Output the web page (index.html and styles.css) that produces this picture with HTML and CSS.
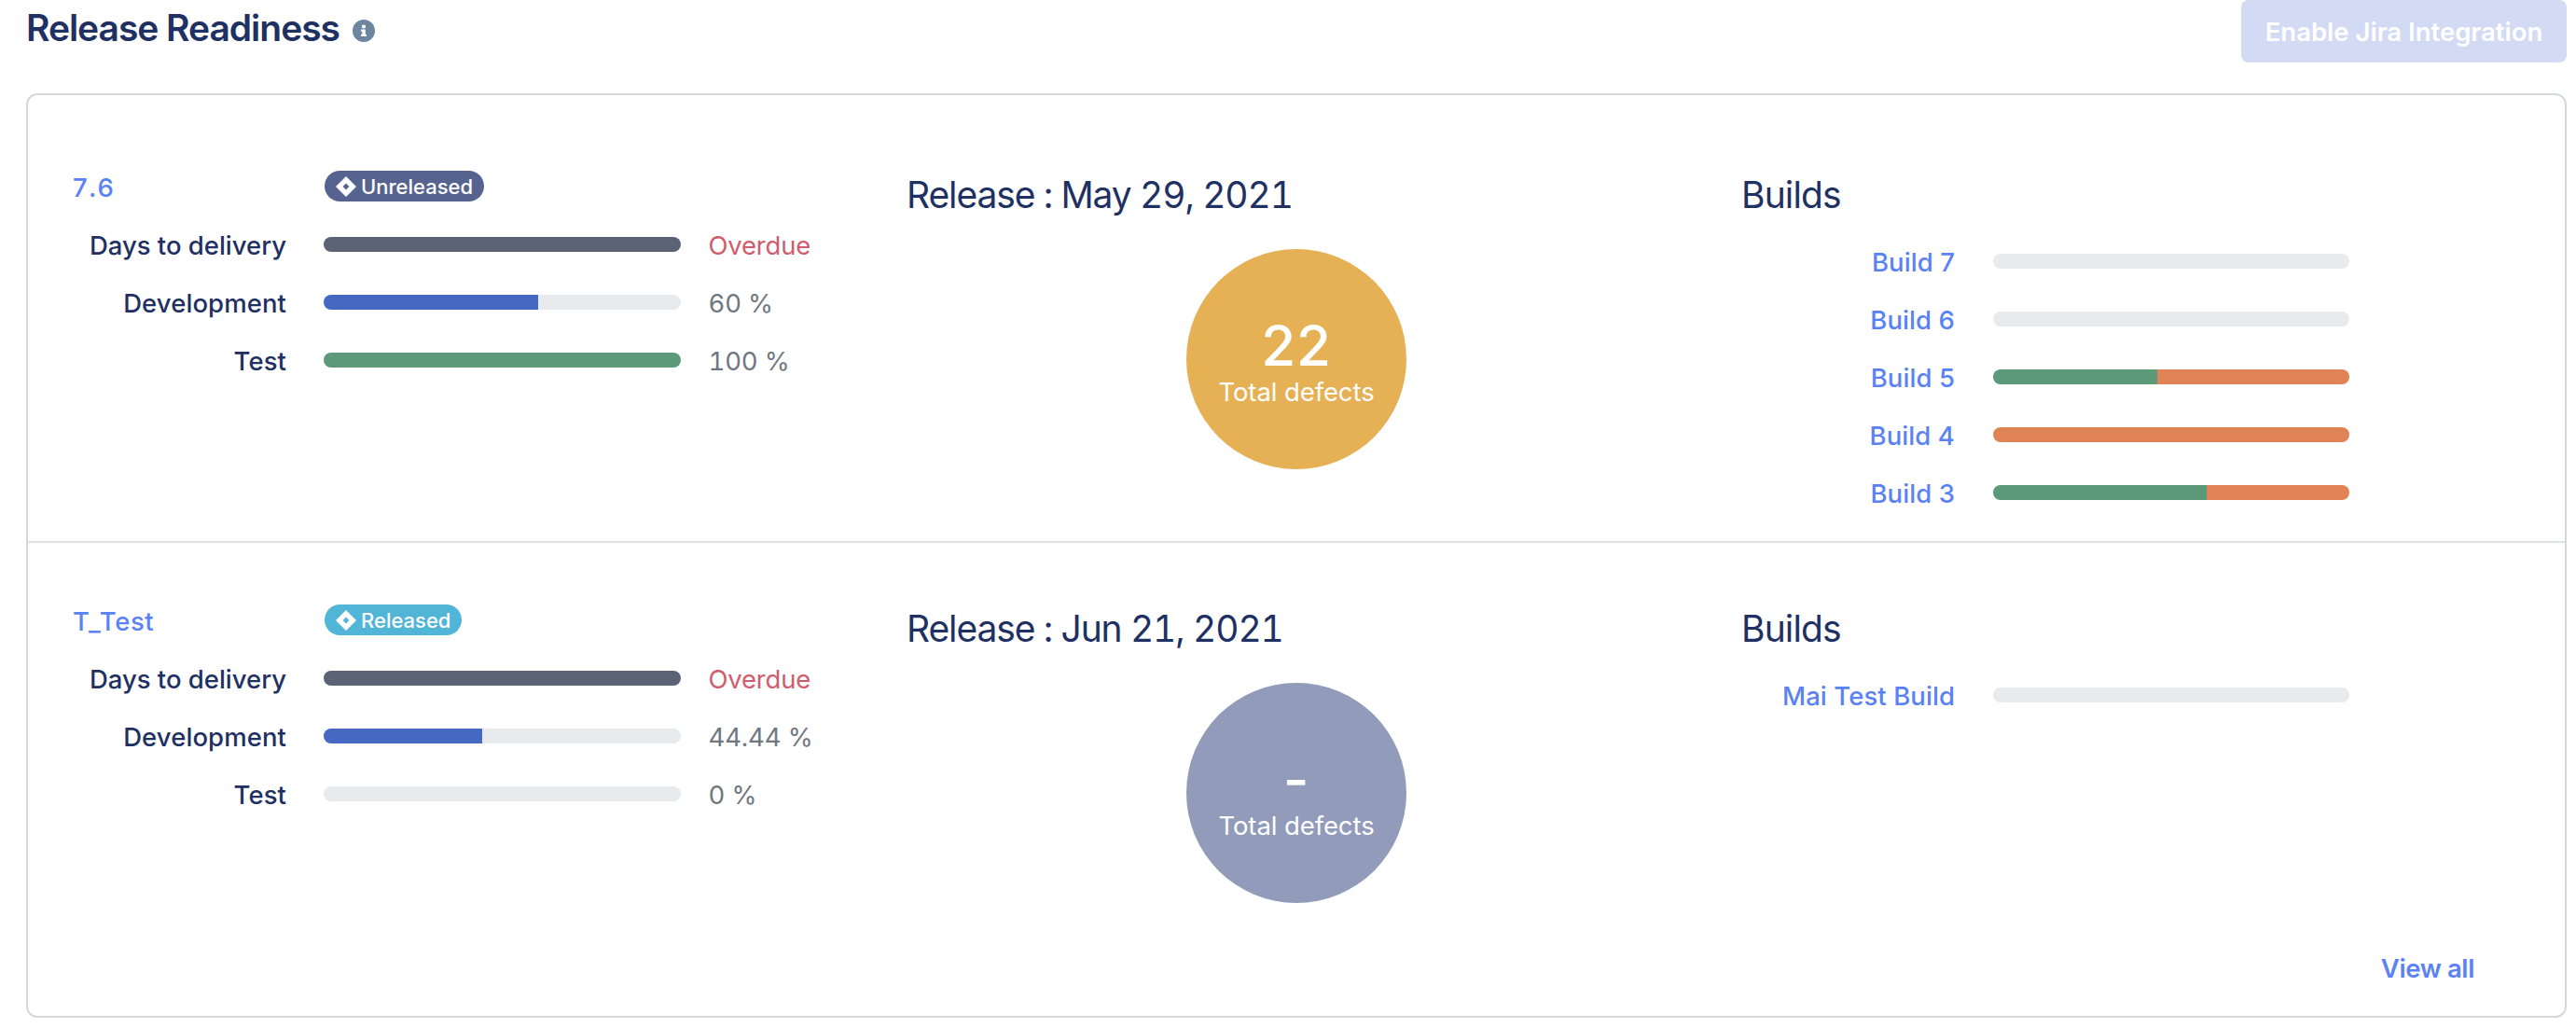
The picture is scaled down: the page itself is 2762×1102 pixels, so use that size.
FILE: index.html
```html
<!DOCTYPE html>
<html lang="en">
<head>
<meta charset="utf-8">
<title>Release Readiness</title>
<link rel="stylesheet" href="styles.css">
</head>
<body>
<header class="header">
  <h1 class="title">Release Readiness</h1>
  <svg class="info" viewBox="0 0 24 24" aria-label="Info"><circle cx="12" cy="12" r="12" fill="#6b869e"/><circle cx="12" cy="7.5" r="2.1" fill="#fff"/><path d="M9.1 10.6h4.7v5.1h1.1v2.2H9.1v-2.2h1.2v-2.9H9.1z" fill="#fff"/></svg>
  <button class="jira-button" disabled>Enable Jira Integration</button>
</header>
<main class="card">
  <section class="release release-first">
    <div class="columns">
      <div class="progress-column">
        <div class="name-row">
          <a class="version digits">7.6</a>
          <span class="badge badge-unreleased"><svg class="badge-icon" viewBox="0 0 22 22"><path fill="#fff" fill-rule="evenodd" d="M11 0 22 11 11 22 0 11zM11 7.6 7.6 11l3.4 3.4 3.4-3.4z"/></svg>Unreleased</span>
        </div>
        <div class="metric"><span class="label days">Days to delivery</span><div class="bar"><div class="fill slate" style="width:100%"></div></div><span class="value overdue">Overdue</span></div>
        <div class="metric"><span class="label">Development</span><div class="bar"><div class="fill blue" style="width:60%"></div></div><span class="value">60 %</span></div>
        <div class="metric"><span class="label">Test</span><div class="bar"><div class="fill green" style="width:100%"></div></div><span class="value">100 %</span></div>
      </div>
      <div class="defects-column">
        <h2 class="heading date">Release : May 29, 2021</h2>
        <div class="circle circle-amber"><strong class="count">22</strong><span class="caption">Total defects</span></div>
      </div>
      <div class="builds-column">
        <h2 class="heading builds-heading">Builds</h2>
        <div class="builds">
          <div class="metric"><a class="label build">Build 7</a><div class="bar"></div></div>
          <div class="metric"><a class="label build">Build 6</a><div class="bar"></div></div>
          <div class="metric"><a class="label build">Build 5</a><div class="bar"><div class="fill green" style="width:46.15%"></div><div class="fill orange" style="width:53.85%"></div></div></div>
          <div class="metric"><a class="label build">Build 4</a><div class="bar"><div class="fill orange" style="width:100%"></div></div></div>
          <div class="metric"><a class="label build">Build 3</a><div class="bar"><div class="fill green" style="width:60%"></div><div class="fill orange" style="width:40%"></div></div></div>
        </div>
      </div>
    </div>
  </section>
  <section class="release release-last">
    <div class="columns">
      <div class="progress-column">
        <div class="name-row">
          <a class="version">T_Test</a>
          <span class="badge badge-released"><svg class="badge-icon" viewBox="0 0 22 22"><path fill="#fff" fill-rule="evenodd" d="M11 0 22 11 11 22 0 11zM11 7.6 7.6 11l3.4 3.4 3.4-3.4z"/></svg>Released</span>
        </div>
        <div class="metric"><span class="label days">Days to delivery</span><div class="bar"><div class="fill slate" style="width:100%"></div></div><span class="value overdue">Overdue</span></div>
        <div class="metric"><span class="label">Development</span><div class="bar"><div class="fill blue" style="width:44.44%"></div></div><span class="value">44.44 %</span></div>
        <div class="metric"><span class="label">Test</span><div class="bar"></div><span class="value">0 %</span></div>
      </div>
      <div class="defects-column">
        <h2 class="heading date">Release : Jun 21, 2021</h2>
        <div class="circle circle-muted"><strong class="count">-</strong><span class="caption">Total defects</span></div>
      </div>
      <div class="builds-column">
        <h2 class="heading builds-heading">Builds</h2>
        <div class="builds">
          <div class="metric"><a class="label build">Mai Test Build</a><div class="bar"></div></div>
        </div>
      </div>
    </div>
    <div class="footer"><a class="view-all">View all</a></div>
  </section>
</main>
</body>
</html>
```
FILE: styles.css
```css
* { box-sizing: border-box; }

body {
  margin: 0;
  background: #fff;
  color: #1f3063;
  font-family: Inter, "Liberation Sans", sans-serif;
  font-size: 27.5px;
}

/* Page header */
.header {
  display: flex;
  align-items: flex-start;
  height: 100px;
  padding: 0 10px 0 28px;
}
.title {
  margin: 0;
  width: 350px;
  font-size: 39px;
  font-weight: 600;
  line-height: 59px;
  letter-spacing: -1.03px;
  white-space: nowrap;
}
.info { width: 24px; height: 24px; margin-top: 21px; }
.jira-button {
  width: 349px;
  height: 67px;
  margin-left: auto;
  padding: 1px 0 0;
  border: 0;
  border-radius: 8px;
  background: #d3daf3;
  color: #fff;
  font: 600 27.5px Inter, "Liberation Sans", sans-serif;
}

/* Releases card */
.card {
  margin: 0 10px 0 28px;
  border: 2px solid #d4d8dd;
  border-radius: 12px;
}
.release-first { height: 480px; padding-top: 68px; border-bottom: 2px solid #dfe1e5; }
.release-last {
  display: flex;
  flex-direction: column;
  height: 507px;
  padding: 53px 0 31px;
}
.columns {
  display: grid;
  grid-template-columns: 895px 895px 836px;
  padding-left: 47px;
}
.defects-column, .builds-column { width: 836px; }

.name-row { display: flex; align-items: center; height: 62px; }
.version {
  width: 271px;
  padding-left: 1px;
  color: #5a82f5;
  font-weight: 500;
  letter-spacing: .6px;
}
.digits { font-kerning: none; letter-spacing: 1.2px; }
.badge {
  display: flex;
  align-items: center;
  height: 33px;
  margin-bottom: 3px;
  padding: 0 12px;
  border-radius: 17px;
  color: #fff;
  font-size: 22px;
  font-weight: 500;
}
.badge-icon { width: 22px; height: 22px; margin-right: 5px; }
.badge-unreleased { background: #56638f; }
.badge-released { background: #50b5d6; }

/* Label, progress bar and value */
.metric {
  display: grid;
  grid-template-columns: 229px 382px;
  column-gap: 41px;
  align-items: center;
  height: 62px;
}
.progress-column .metric { grid-template-columns: 230px 383px auto; column-gap: 40px; }
.label { font-weight: 500; text-align: right; letter-spacing: .08px; white-space: nowrap; }
.days { letter-spacing: -.02px; }
.build { color: #5a82f5; letter-spacing: .08px; }
.bar {
  display: flex;
  height: 16px;
  margin-bottom: 2px;
  overflow: hidden;
  border-radius: 8px;
  background: #e7ebee;
}
.fill { height: 100%; }
.slate { background: #596375; }
.blue { background: #4569c2; }
.green { background: #5c9979; }
.orange { background: #e08457; }
.value {
  margin-left: -10.5px;
  color: #6f7881;
  font-variant-numeric: tabular-nums;
  letter-spacing: -.15px;
  white-space: nowrap;
}
.overdue { color: #d15c6c; letter-spacing: -.21px; }

.heading { margin: 0; font-size: 39px; font-weight: 400; line-height: 77px; }
.date { font-variant-numeric: tabular-nums; letter-spacing: -1.1px; }
.builds-heading { letter-spacing: -.87px; }
.builds { margin-top: 3px; }

.circle {
  display: flex;
  flex-direction: column;
  align-items: center;
  width: 236px;
  height: 236px;
  margin: 20px auto 0;
  padding-top: 73px;
  border-radius: 50%;
  color: #fff;
}
.circle-amber { background: #e5b154; }
.circle-muted { background: #929cba; }
.count { font-size: 60px; font-weight: 500; line-height: 60px; letter-spacing: .8px; }
.caption { margin-top: 2px; line-height: 36px; letter-spacing: -.09px; }

.footer { margin-top: auto; padding-right: 97px; line-height: 40px; text-align: right; }
.view-all { color: #5a82f5; font-weight: 600; letter-spacing: -.39px; }
```
